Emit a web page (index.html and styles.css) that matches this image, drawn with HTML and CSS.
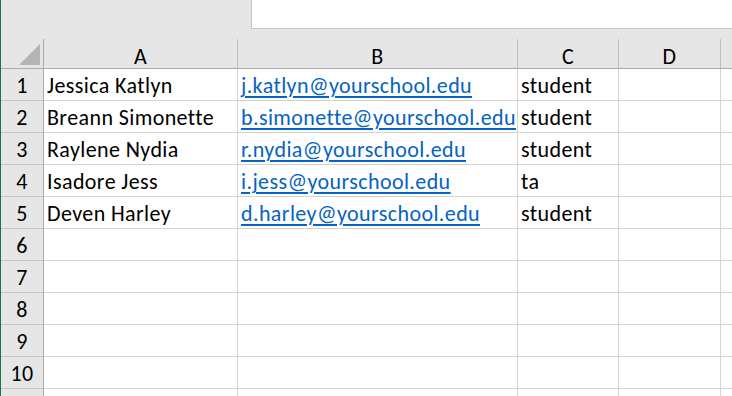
FILE: index.html
```html
<!DOCTYPE html>
<html lang="en">
<head>
<meta charset="utf-8">
<title>Sheet</title>
<link rel="stylesheet" href="styles.css">
</head>
<body>
<div class="app">
  <div class="topbar">
    <div class="spacer"></div>
    <div class="namebox"></div>
  </div>
  <div class="sheet">
    <div class="corner">
      <svg class="tri" width="21" height="21" viewBox="0 0 21 21"><polygon points="21,0 21,21 0,21" fill="#b4b4b4"/></svg>
    </div>
    <div class="colhead">A</div>
    <div class="colhead">B</div>
    <div class="colhead">C</div>
    <div class="colhead">D</div>
    <div class="colhead end"></div>

    <div class="rowhead">1</div>
    <div class="cell">Jessica Katlyn</div>
    <div class="cell"><a class="link" href="#">j.katlyn@yourschool.edu</a></div>
    <div class="cell">student</div>
    <div class="cell"></div>
    <div class="cell end"></div>

    <div class="rowhead">2</div>
    <div class="cell">Breann Simonette</div>
    <div class="cell"><a class="link" href="#">b.simonette@yourschool.edu</a></div>
    <div class="cell">student</div>
    <div class="cell"></div>
    <div class="cell end"></div>

    <div class="rowhead">3</div>
    <div class="cell">Raylene Nydia</div>
    <div class="cell"><a class="link" href="#">r.nydia@yourschool.edu</a></div>
    <div class="cell">student</div>
    <div class="cell"></div>
    <div class="cell end"></div>

    <div class="rowhead">4</div>
    <div class="cell">Isadore Jess</div>
    <div class="cell"><a class="link" href="#">i.jess@yourschool.edu</a></div>
    <div class="cell">ta</div>
    <div class="cell"></div>
    <div class="cell end"></div>

    <div class="rowhead">5</div>
    <div class="cell">Deven Harley</div>
    <div class="cell"><a class="link" href="#">d.harley@yourschool.edu</a></div>
    <div class="cell">student</div>
    <div class="cell"></div>
    <div class="cell end"></div>

    <div class="rowhead">6</div>
    <div class="cell"></div><div class="cell"></div><div class="cell"></div><div class="cell"></div><div class="cell end"></div>
    <div class="rowhead">7</div>
    <div class="cell"></div><div class="cell"></div><div class="cell"></div><div class="cell"></div><div class="cell end"></div>
    <div class="rowhead">8</div>
    <div class="cell"></div><div class="cell"></div><div class="cell"></div><div class="cell"></div><div class="cell end"></div>
    <div class="rowhead">9</div>
    <div class="cell"></div><div class="cell"></div><div class="cell"></div><div class="cell"></div><div class="cell end"></div>
    <div class="rowhead">10</div>
    <div class="cell"></div><div class="cell"></div><div class="cell"></div><div class="cell"></div><div class="cell end"></div>
    <div class="rowhead"></div>
    <div class="cell"></div><div class="cell"></div><div class="cell"></div><div class="cell"></div><div class="cell end"></div>
  </div>
</div>
</body>
</html>
```
FILE: styles.css
```css
html, body {
  margin: 0;
  padding: 0;
  background: #e6e6e6;
  overflow: hidden;
}
body {
  font-family: "Carlito", "Lato", "Liberation Sans", sans-serif;
  font-size: 22px;
  letter-spacing: 0.4px;
  color: #000;
}
.app {
  width: 732px;
  height: 396px;
  border-left: 1px solid #217346;
  box-sizing: border-box;
  overflow: hidden;
}
.topbar {
  display: flex;
  height: 39px;
}
.spacer {
  width: 250px;
  flex: none;
}
.namebox {
  flex: 1;
  height: 28px;
  background: #fff;
  border-left: 1px solid #c6c6c6;
  border-bottom: 1px solid #c6c6c6;
}
.sheet {
  display: grid;
  grid-template-columns: 43px 194px 280px 101px 102px 1fr;
  grid-template-rows: 30px repeat(11, 32px);
}
.sheet > div {
  box-sizing: border-box;
  min-width: 0;
  overflow: hidden;
  white-space: nowrap;
}
.corner {
  display: flex;
  justify-content: flex-end;
  align-items: flex-end;
  padding: 0 3px 3px 0;
  border-right: 1px solid #ababab;
  border-bottom: 1px solid #ababab;
}
.tri { display: block; }
.colhead {
  display: flex;
  justify-content: center;
  align-items: center;
  padding-top: 5px;
  border-right: 1px solid #c0c0c0;
  border-bottom: 1px solid #ababab;
  background: #e6e6e6;
}
.rowhead {
  display: flex;
  justify-content: center;
  align-items: center;
  padding-top: 2px;
  background: #e6e6e6;
  border-right: 1px solid #ababab;
  border-bottom: 1px solid #c8c8c8;
}
.cell {
  display: flex;
  align-items: center;
  padding: 2px 0 0 3px;
  background: #fff;
  border-right: 1px solid #d4d4d4;
  border-bottom: 1px solid #d4d4d4;
}
.end { border-right: none; }
.link {
  color: #0563c1;
  text-decoration: underline;
  text-decoration-thickness: 2px;
  text-underline-offset: 3px;
}
```
